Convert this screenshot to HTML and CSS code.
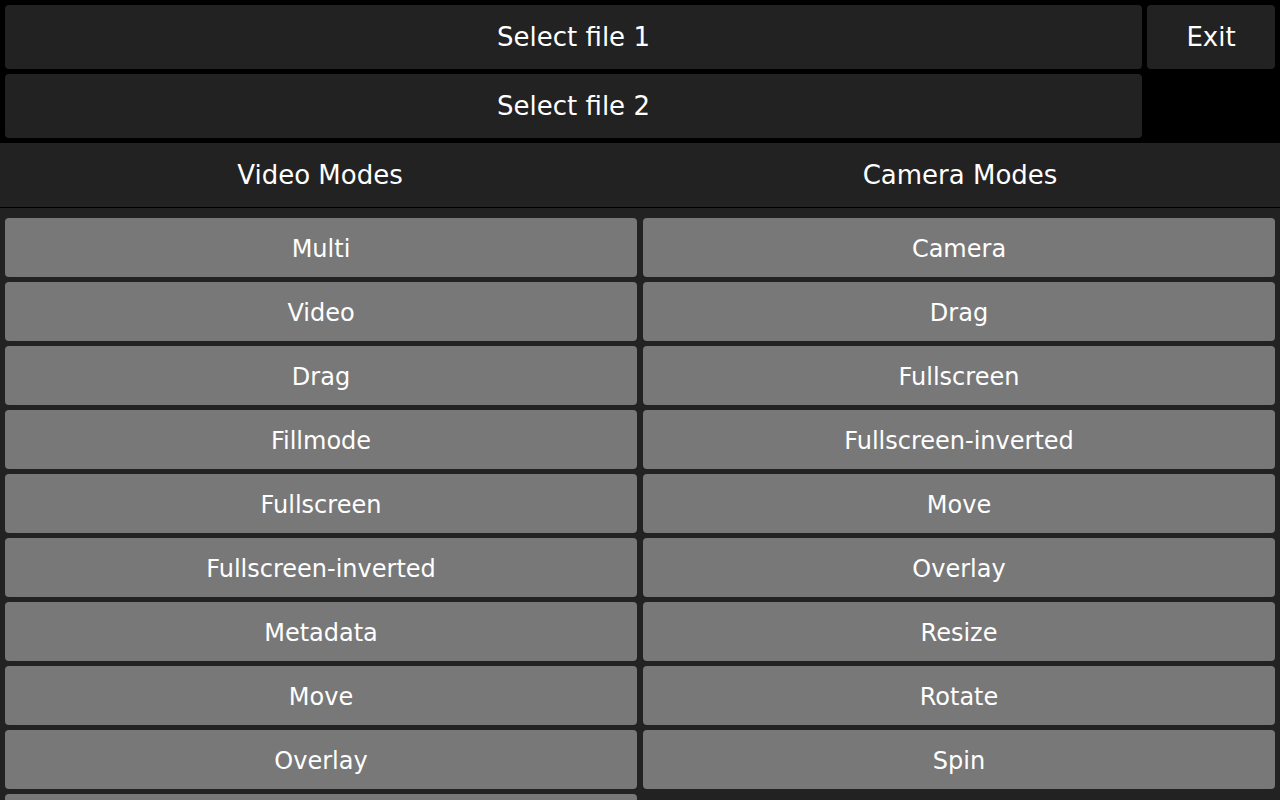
FILE: index.html
```html
<!DOCTYPE html>
<html>
<head>
<meta charset="utf-8">
<link rel="stylesheet" href="styles.css">
</head>
<body>
<div class="top">
  <div class="files">
    <button class="dark">Select file 1</button>
    <button class="dark">Select file 2</button>
  </div>
  <div class="side">
    <button class="dark exit">Exit</button>
  </div>
</div>
<div class="panel">
  <div class="tabs">
    <div class="tab">Video Modes</div>
    <div class="tab">Camera Modes</div>
  </div>
  <div class="cols">
    <div class="col">
      <button class="mode">Multi</button>
      <button class="mode">Video</button>
      <button class="mode">Drag</button>
      <button class="mode">Fillmode</button>
      <button class="mode">Fullscreen</button>
      <button class="mode">Fullscreen-inverted</button>
      <button class="mode">Metadata</button>
      <button class="mode">Move</button>
      <button class="mode">Overlay</button>
      <button class="mode"></button>
    </div>
    <div class="col">
      <button class="mode">Camera</button>
      <button class="mode">Drag</button>
      <button class="mode">Fullscreen</button>
      <button class="mode">Fullscreen-inverted</button>
      <button class="mode">Move</button>
      <button class="mode">Overlay</button>
      <button class="mode">Resize</button>
      <button class="mode">Rotate</button>
      <button class="mode">Spin</button>
    </div>
  </div>
</div>
</body>
</html>
```
FILE: styles.css
```css
html, body {
  margin: 0;
  padding: 0;
  background: #000;
  height: 800px;
  overflow: hidden;
  font-family: "DejaVu Sans", sans-serif;
}
button {
  font-family: "DejaVu Sans", sans-serif;
  color: #fff;
  border: none;
  margin: 0;
  padding: 0;
  border-radius: 4px;
}
.top {
  display: flex;
  gap: 5px;
  padding: 5px 5px 0 5px;
}
.files {
  display: flex;
  flex-direction: column;
  gap: 5px;
  width: 1137px;
}
.side {
  width: 128px;
}
.dark {
  background: #222;
  height: 64px;
  width: 100%;
  font-size: 26px;
}
.panel {
  margin-top: 5px;
  background: #222;
  height: 657px;
}
.tabs {
  display: flex;
  height: 64px;
  border-bottom: 1px solid #000;
}
.tab {
  flex: 1;
  display: flex;
  align-items: center;
  justify-content: center;
  color: #fff;
  font-size: 26px;
}
.cols {
  display: flex;
  gap: 6px;
  padding: 10px 5px 0 5px;
}
.col {
  flex: 1;
  display: flex;
  flex-direction: column;
  gap: 5px;
}
.mode {
  background: #787878;
  height: 59px;
  padding-top: 2px;
  font-size: 24px;
  width: 100%;
}
```
